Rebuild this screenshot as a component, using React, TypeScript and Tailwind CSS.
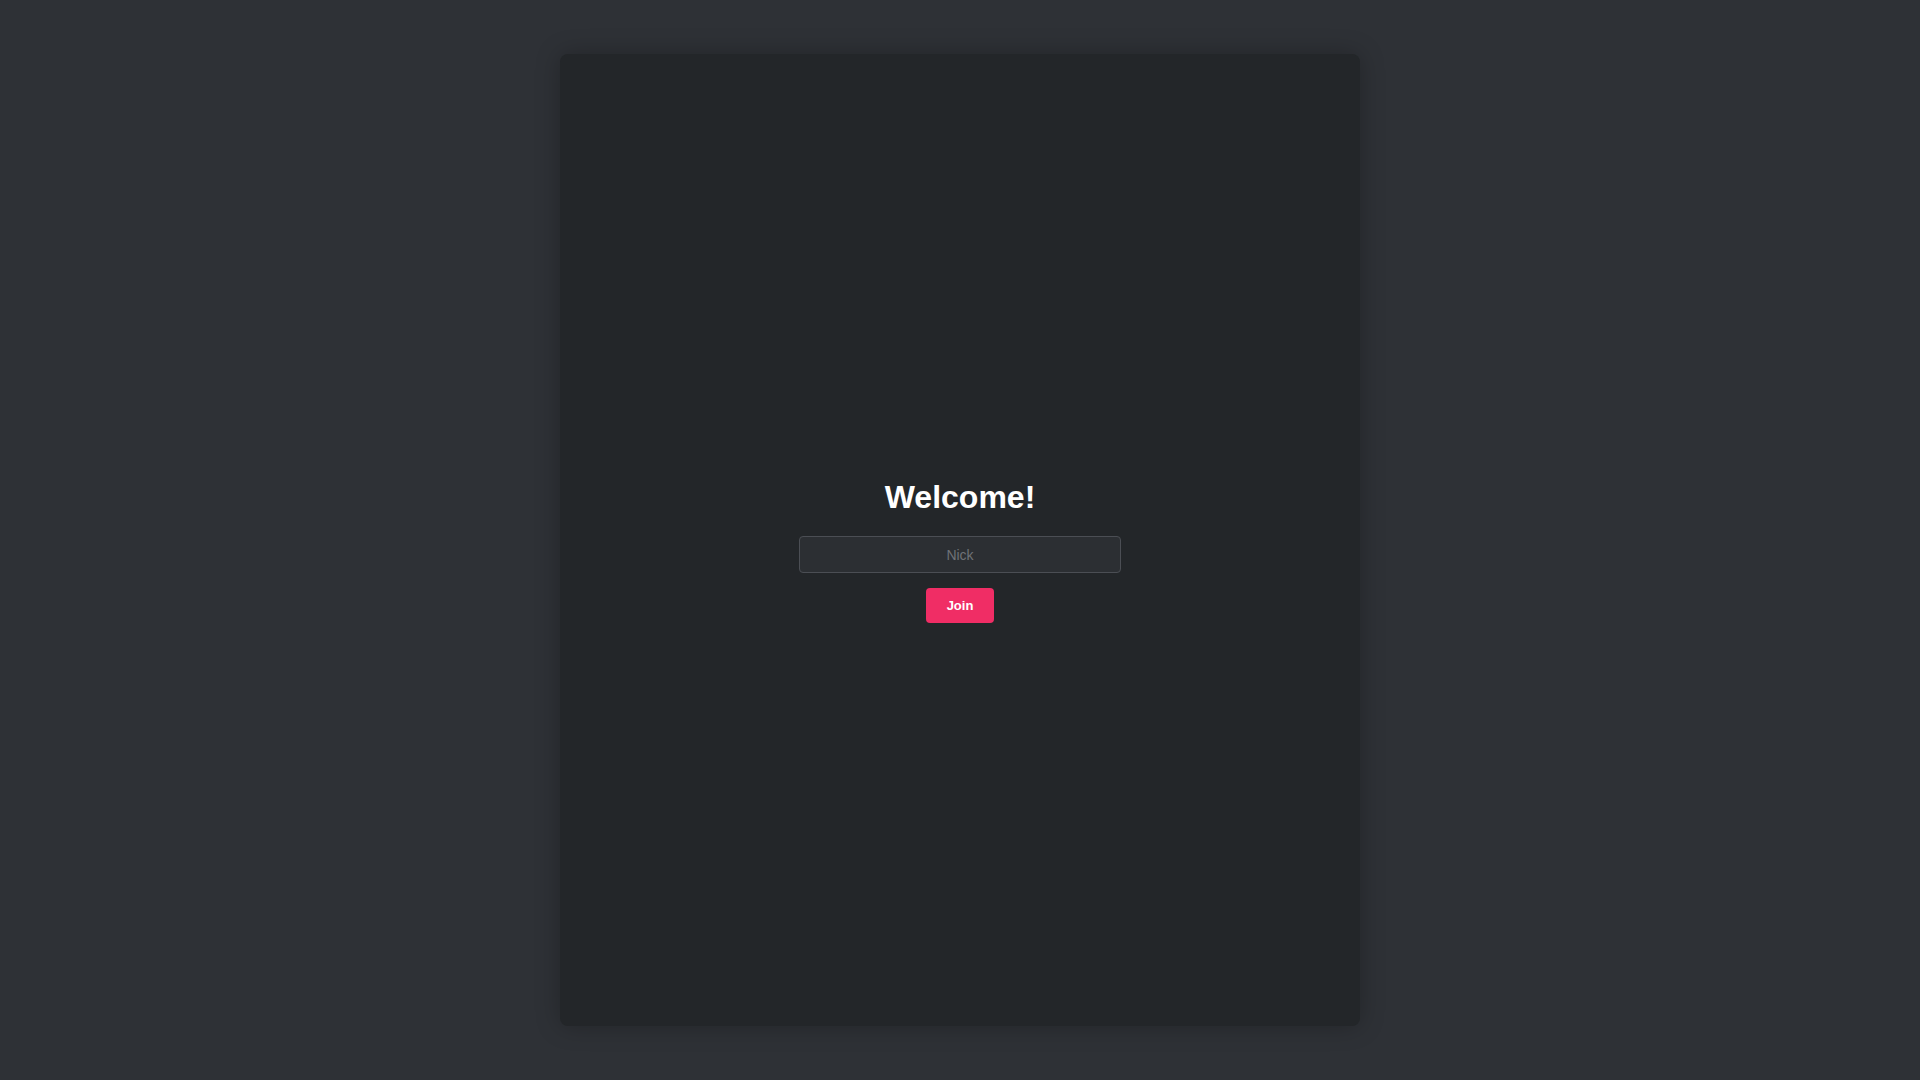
import React from "react";

const App = () => {
  return (
    <div className="min-h-screen w-full bg-[#2e3136] flex justify-center py-[54px] font-['Liberation_Sans',Arial,sans-serif]">
      <div className="w-[800px] h-[972px] bg-[#232629] rounded-lg shadow-[0_0_24px_rgba(0,0,0,0.25)] flex flex-col items-center justify-center pt-[22px]">
        <h1 className="text-[32px] font-bold text-white leading-[37px] mb-[20px]">
          Welcome!
        </h1>
        <input
          type="text"
          placeholder="Nick"
          className="w-[322px] h-[37px] rounded-[4px] border border-[#4b4e54] bg-[#2c2f33] text-center text-[14px] text-white placeholder:text-[#6f7277] outline-none"
        />
        <button className="mt-[15px] h-[35px] px-[21px] rounded-[4px] bg-[#f02d65] text-white text-[13px] font-bold">
          Join
        </button>
      </div>
    </div>
  );
};

export default App;
